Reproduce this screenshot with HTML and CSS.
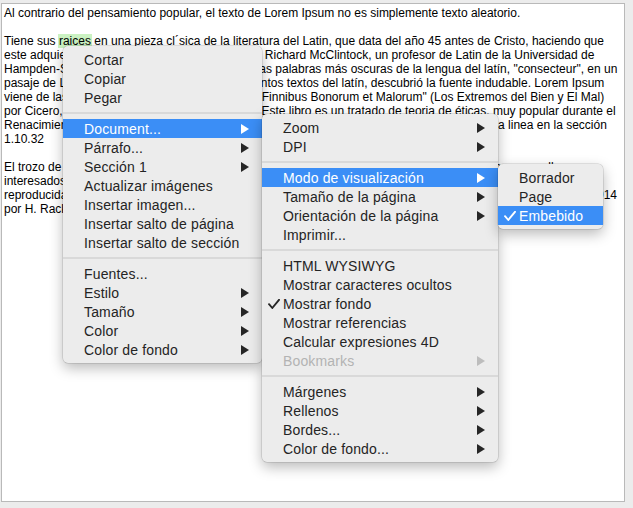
FILE: index.html
```html
<!DOCTYPE html>
<html lang="es">
<head>
<meta charset="utf-8">
<title>Menú contextual</title>
<link rel="stylesheet" href="styles.css">
</head>
<body>
<div class="doc">
  <p>Al contrario del pensamiento popular, el texto de Lorem Ipsum no es simplemente texto aleatorio.</p>
  <p>Tiene sus <span class="hl">raices</span> en una pieza cl´sica de la literatura del Latin, que data del año 45 antes de Cristo, haciendo que este adquiera mas de 2000 años de antiguedad. Richard McClintock, un profesor de Latin de la Universidad de Hampden-Sydney en Virginia, encontró una de las palabras más oscuras de la lengua del latín, "consecteur", en un pasaje de Lorem Ipsum, y al seguir leyendo distintos textos del latín, descubrió la fuente indudable. Lorem Ipsum viene de las secciones 1.10.32 y 1.10.33 de "de Finnibus Bonorum et Malorum" (Los Extremos del Bien y El Mal) por Cicero, escrito en el año 45 antes de Cristo. Este libro es un tratado de teoria de éticas, muy popular durante el Renacimiento. La primera linea del Lorem Ipsum, "Lorem ipsum dolor sit amet..", viene de una linea en la sección 1.10.32</p>
  <p>El trozo de texto estándar de Lorem Ipsum usado desde el año 1500 es reproducido debajo para aquellos interesados. Las secciones 1.10.32 y 1.10.33 de "de Finibus Bonorum et Malorum" por Cicero son también reproducidas en su forma original exacta, acompañadas por versiones en Inglés de la traducción realizada en 1914 por H. Rackham.</p>
</div>

<div class="menu menu-main">
  <div class="item">Cortar</div>
  <div class="item">Copiar</div>
  <div class="item">Pegar</div>
  <div class="sep"></div>
  <div class="item sub active">Document...</div>
  <div class="item sub">Párrafo...</div>
  <div class="item sub">Sección 1</div>
  <div class="item">Actualizar imágenes</div>
  <div class="item">Insertar imagen...</div>
  <div class="item">Insertar salto de página</div>
  <div class="item">Insertar salto de sección</div>
  <div class="sep"></div>
  <div class="item">Fuentes...</div>
  <div class="item sub">Estilo</div>
  <div class="item sub">Tamaño</div>
  <div class="item sub">Color</div>
  <div class="item sub">Color de fondo</div>
</div>

<div class="menu menu-doc">
  <div class="item sub">Zoom</div>
  <div class="item sub">DPI</div>
  <div class="sep"></div>
  <div class="item sub active">Modo de visualización</div>
  <div class="item sub">Tamaño de la página</div>
  <div class="item sub">Orientación de la página</div>
  <div class="item">Imprimir...</div>
  <div class="sep"></div>
  <div class="item">HTML WYSIWYG</div>
  <div class="item">Mostrar caracteres ocultos</div>
  <div class="item checked"><svg class="check" viewBox="0 0 12 10"><path d="M1 5.2 L4.3 9 L11 0.8"/></svg>Mostrar fondo</div>
  <div class="item">Mostrar referencias</div>
  <div class="item">Calcular expresiones 4D</div>
  <div class="item sub disabled">Bookmarks</div>
  <div class="sep"></div>
  <div class="item sub">Márgenes</div>
  <div class="item sub">Rellenos</div>
  <div class="item sub">Bordes...</div>
  <div class="item sub">Color de fondo...</div>
</div>

<div class="menu menu-mode">
  <div class="item">Borrador</div>
  <div class="item">Page</div>
  <div class="item checked active"><svg class="check" viewBox="0 0 12 10"><path d="M1 5.2 L4.3 9 L11 0.8"/></svg>Embebido</div>
</div>
</body>
</html>
```

FILE: styles.css
```css
html {
  background: #ececec;
}

body {
  margin: 0;
  padding: 3px 0 0 1px;
  background: #ececec;
  font-family: "Liberation Sans", Arial, sans-serif;
}

.doc {
  box-sizing: border-box;
  width: 624px;
  height: 499px;
  border: 1px solid #b9b9b9;
  background: #ffffff;
  padding: 2px 5px 2px 2px;
  font-size: 12px;
  line-height: 14px;
  color: #000;
}

.doc p {
  margin: 0 0 14px;
}

.hl {
  background: #cbf2c2;
  padding: 0 1px 0 1px;
  margin: 0 -1px;
}

.menu {
  position: absolute;
  box-sizing: border-box;
  padding: 4px 0;
  background: #ececec;
  border-radius: 5px;
  box-shadow: 0 0 0 0.5px rgba(0, 0, 0, 0.18), 0 5px 14px rgba(0, 0, 0, 0.28);
  font-family: "Liberation Sans", Arial, sans-serif;
  font-size: 14px;
  letter-spacing: 0.15px;
  color: #242424;
}

.menu-main {
  left: 63px;
  top: 46px;
  width: 199px;
}

.menu-doc {
  left: 262px;
  top: 114px;
  width: 236px;
}

.menu-mode {
  left: 498px;
  top: 164px;
  width: 105px;
}

.item {
  position: relative;
  box-sizing: border-box;
  height: 19px;
  padding-top: 1px;
  line-height: 19px;
  padding-left: 21px;
  white-space: nowrap;
}

.item.sub::after {
  content: "";
  position: absolute;
  right: 13px;
  top: 5px;
  width: 0;
  height: 0;
  border-top: 5px solid transparent;
  border-bottom: 5px solid transparent;
  border-left: 8px solid #262626;
}

.item.active {
  background: #3b8ef6;
  color: #ffffff;
}

.item.active.sub::after {
  border-left-color: #ffffff;
}

.item.disabled {
  color: #b3b3b3;
}

.item.disabled.sub::after {
  border-left-color: #bdbdbd;
}

.check {
  position: absolute;
  left: 6px;
  top: 5px;
  width: 12px;
  height: 10px;
  fill: none;
  stroke: #262626;
  stroke-width: 1.9;
  stroke-linecap: round;
  stroke-linejoin: round;
}

.item.active .check {
  stroke: #ffffff;
}

.sep {
  height: 2px;
  margin: 5px 0;
  background: #d9d9d9;
}
```
